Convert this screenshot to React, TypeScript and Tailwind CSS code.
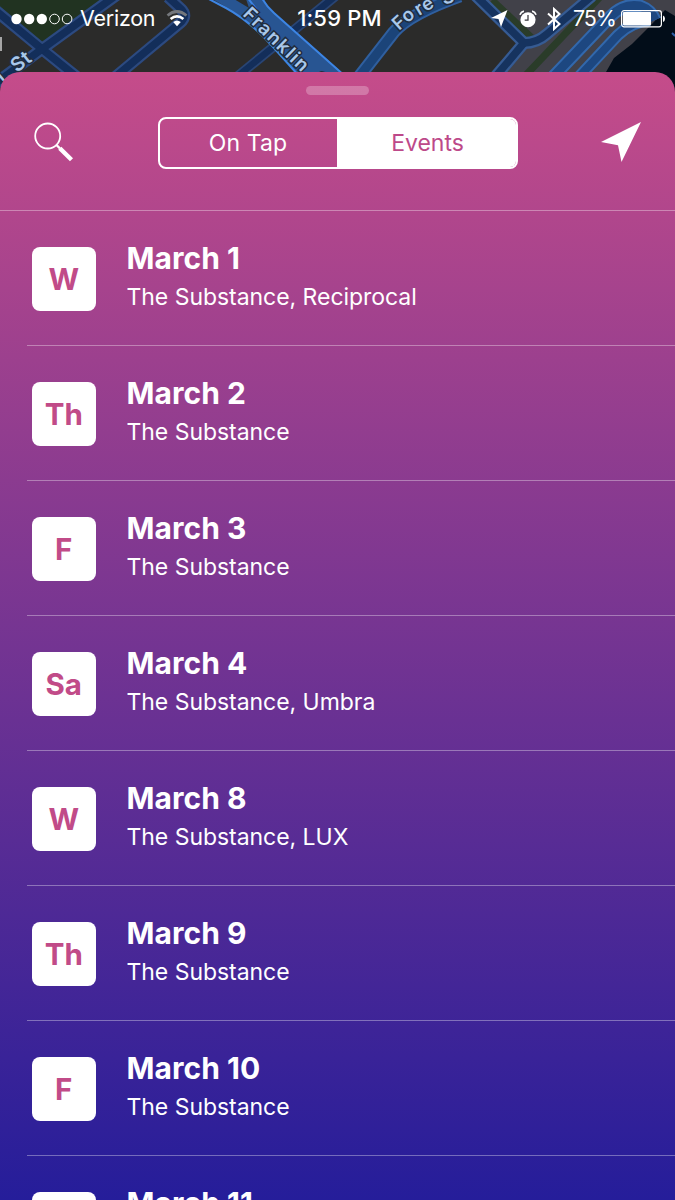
const events = [
  { day: 'W', date: 'March 1', venues: 'The Substance, Reciprocal' },
  { day: 'Th', date: 'March 2', venues: 'The Substance' },
  { day: 'F', date: 'March 3', venues: 'The Substance' },
  { day: 'Sa', date: 'March 4', venues: 'The Substance, Umbra' },
  { day: 'W', date: 'March 8', venues: 'The Substance, LUX' },
  { day: 'Th', date: 'March 9', venues: 'The Substance' },
  { day: 'F', date: 'March 10', venues: 'The Substance' },
  { day: 'Sa', date: 'March 11', venues: 'The Substance' },
]

// d, outline colour, fill colour, outline width, fill width
const roads: [string, string, string, number, number][] = [
  ['M-5 10L42 49L78 78', '#2c4a80', '#132e5a', 12, 7.5],
  ['M-8 86L42 49L118 -6', '#2c4a80', '#132e5a', 12, 7.5],
  ['M114 78L180 23Q188 16 181 9L168 -3', '#2c4a80', '#132e5a', 12, 7.5],
  ['M233 80L338 -6', '#294574', '#132e5a', 10, 6.5],
  ['M355 82L394 32Q410 14 460 -4', '#2f5f9f', '#1b4479', 13, 9],
  ['M474 -6L524 43L496 76', '#365b93', '#16335f', 12, 7.5],
  ['M524 43Q537 43 547 34L592 -4', '#365b93', '#16335f', 12, 7.5],
  ['M552 78L611 16Q624 3 640 6Q651 10 655 20', '#3268ac', '#1d4780', 13, 9],
  ['M576 80L618 35Q631 22 650 20', '#3268ac', '#1d4780', 12, 8],
]

const MapStrip = () => (
  <svg className="absolute left-0 top-0" width="675" height="96" viewBox="0 0 675 96" fill="none">
    <rect width="675" height="96" fill="#2b2b2a" />
    <path d="M2 0H106L43 46L0 10V0Z" fill="#213321" />
    <path d="M478 0H675V96H478L523 44Z" fill="#414149" />
    <path d="M492 0L532 38M525 76L601 -4" stroke="#2a3c29" strokeWidth="7" />
    <path d="M606 72L614 58L632 44L652 24L665 10L675 16V96H600Z" fill="#020d19" />
    {roads.map(([d, edge, , outer]) => (
      <path key={d} d={d} stroke={edge} strokeWidth={outer} />
    ))}
    {roads.map(([d, , fill, , inner]) => (
      <path key={d} d={d} stroke={fill} strokeWidth={inner} />
    ))}
    <path d="M207 -4L228 8Q252 22 275 49L298 76H346L268 7L262 -5Z" fill="#285592" />
    <path d="M234 -1L249 8L246 -1Z" fill="#2b2b2a" />
    <path d="M205 -3L226 8Q250 21 274 48L299 76" stroke="#3d85e3" strokeWidth="2" />
    <path d="M247 -3L257 10M261 -4Q265 5 274 13L346 77" stroke="#3d85e3" strokeWidth="2" />
    <path d="M672 33L675 36" stroke="#2d5fa8" strokeWidth="2" />
    <g
      fill="#a9c8ea"
      stroke="#202c3c"
      strokeWidth="3"
      paintOrder="stroke"
      fontFamily="Inter, sans-serif"
      fontSize="18.5"
      fontWeight="600"
    >
      <text transform="translate(242 15) rotate(44)" textLength="83">Franklin</text>
      <text transform="translate(312 80) rotate(43)">S</text>
      <text transform="translate(399 31) rotate(-42)" letterSpacing="1">Fo</text>
      <text transform="translate(419 16) rotate(-31)" letterSpacing="1">re</text>
      <text transform="translate(444 5) rotate(-18)">S</text>
      <text transform="translate(2 82) rotate(-40)">l</text>
      <text transform="translate(17 73) rotate(-38)" fontSize="19.5" letterSpacing=".8">St</text>
    </g>
    <path d="M0 37H2V51H0Z" fill="#a6a6a6" />
  </svg>
)

const StatusBar = () => (
  <div className="relative grid h-[37px] grid-cols-[1fr_auto_1fr] items-center pl-[11px] pr-[10px] text-[22px] leading-none">
    <div className="flex items-center">
      <svg width="62" height="12" viewBox="0 0 62 12" fill="#fff">
        <circle cx="5.5" cy="6" r="5.2" />
        <circle cx="18.2" cy="6" r="5.2" />
        <circle cx="30.8" cy="6" r="5.2" />
        <g fill="none" stroke="#fff">
          <circle cx="43.5" cy="6" r="4.8" />
          <circle cx="56.1" cy="6" r="4.8" />
        </g>
      </svg>
      <span className="ml-[7px] w-[75px] whitespace-nowrap text-[21.5px] tracking-[-0.25px]">Verizon</span>
      <svg className="ml-[11px]" width="22" height="17" viewBox="0 0 22 17" fill="none" stroke="#fff" strokeWidth="2.7">
        <path d="M1.5 5.5Q11 -2.5 20.5 5.5" stroke="#74777c" />
        <path d="M4.6 9Q11 3.8 17.4 9" />
        <path d="M7.2 12Q11 9 14.8 12L11 16.2Z" fill="#fff" stroke="none" />
      </svg>
    </div>
    <span className="mb-[2px] ml-[3px] whitespace-nowrap text-[22px] font-medium tracking-[0.2px]">1:59 PM</span>
    <div className="flex items-center justify-end">
      <svg width="17" height="17" viewBox="0 0 17 17" fill="#fff">
        <path d="M16.5 0L0 8L7.5 9L10 17Z" />
      </svg>
      <svg className="ml-[11px]" width="18" height="18" viewBox="0 0 19 19" fill="none" stroke="#fff">
        <circle cx="9.5" cy="10.3" r="8" fill="#fff" stroke="none" />
        <path d="M1 5Q2 2 5.2 1.2M13.8 1.2Q17 2 18 5" strokeWidth="1.8" />
        <path d="M9.5 5.2V10.6H6" stroke="#34343a" strokeWidth="1.3" />
      </svg>
      <svg className="ml-[10px]" width="14" height="24" viewBox="0 0 14 24" fill="none" stroke="#fff" strokeWidth="2">
        <path d="M1 6.5L12.5 17L7 22V2L12.5 7L1 17.5" />
      </svg>
      <span className="ml-[12px] w-[43px] whitespace-nowrap text-[21.5px] tracking-[-1.1px]">75%</span>
      <svg className="ml-[5px]" width="44" height="18" viewBox="0 0 44 18" fill="none">
        <rect x=".6" y=".6" width="39.8" height="16.2" rx="2.5" stroke="#fff" strokeWidth="1.2" />
        <rect x="2" y="2" width="28" height="13.4" rx=".8" fill="#fff" />
        <path d="M42 5.5Q44 6.2 44 8.7Q44 11.2 42 12Z" fill="#fff" />
      </svg>
    </div>
  </div>
)

const App = () => (
  <div className="relative flex h-[1200px] w-[675px] flex-col overflow-hidden bg-[#2b2b2a] font-['Inter',sans-serif] text-white">
    <MapStrip />
    <StatusBar />
    <main className="relative mt-[35px] flex min-h-0 flex-1 flex-col overflow-hidden rounded-t-[20px] bg-linear-to-b/srgb from-[#c54c8a] to-[#251d9a]">
      <div className="mx-auto mt-[14px] h-[9px] w-[63px] shrink-0 rounded-full bg-white/25" />
      <header className="flex h-[116px] shrink-0 items-start justify-between border-b border-white/35 px-[34px] pt-[22px]">
        <button aria-label="Search" className="mt-[5px]">
          <svg width="40" height="40" viewBox="0 0 40 40" fill="none" stroke="#fff">
            <circle cx="13.7" cy="14" r="12.5" strokeWidth="1.8" />
            <path d="M22.5 23L26 26.5" strokeWidth="2.4" />
            <path d="M25.8 26.2L37.5 37.8" strokeWidth="4.4" />
          </svg>
        </button>
        <div className="flex h-[52px] w-[360px] overflow-hidden rounded-[8px] border-2 border-white bg-clip-border text-[23px]">
          <button className="w-[177px] tracking-[0.1px]">On Tap</button>
          <button className="flex-1 bg-white pl-[3px] text-[#bd4989]">Events</button>
        </div>
        <button aria-label="Current location" className="mt-[5px]">
          <svg width="40" height="40" viewBox="0 0 40 40" fill="#fff">
            <path d="M40 0L0 20L17 23.2L20.5 40Z" />
          </svg>
        </button>
      </header>
      <ul className="pl-[27px]">
        {events.map((event) => (
          <li key={event.date} className="flex h-[135px] items-start border-b border-white/35 pl-[5px] pt-[36px]">
            <div className="flex size-[63.5px] shrink-0 items-center justify-center rounded-[8px] bg-white pt-px text-[29.5px] font-bold text-[#c14b88]">
              {event.day}
            </div>
            <div className="ml-[31px] mt-[-8px] whitespace-nowrap">
              <h2 className="text-[30px] font-bold leading-[38px] tracking-[0.05px]">{event.date}</h2>
              <p className="mt-[3px] text-[23px] leading-[34px] tracking-[-0.04px]">{event.venues}</p>
            </div>
          </li>
        ))}
      </ul>
    </main>
  </div>
)

export default App
